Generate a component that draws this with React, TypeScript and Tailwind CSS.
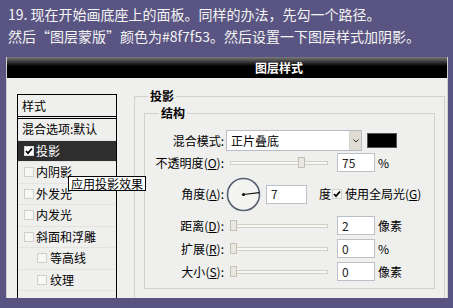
import React from "react"

const layerItems = [
  { label: "混合选项:默认", box: false },
  { label: "投影", box: true, checked: true, active: true },
  { label: "内阴影", box: true },
  { label: "外发光", box: true },
  { label: "内发光", box: true },
  { label: "斜面和浮雕", box: true },
  { label: "等高线", box: true, indent: true },
  { label: "纹理", box: true, indent: true },
]

function Check({ checked, dark }: { checked?: boolean; dark?: boolean }) {
  return (
    <span
      className={`flex h-[10px] w-[10px] shrink-0 items-center justify-center border ${
        dark ? "border-[#d8d8d8] bg-white" : "border-[#cfcfcb] bg-[#f7f7f5]"
      }`}
    >
      {checked && (
        <svg width="8" height="8" viewBox="0 0 8 8">
          <path d="M1 4 L3 6.2 L7 1.5" fill="none" stroke="#000" strokeWidth="1.8" />
        </svg>
      )}
    </span>
  )
}

function Slider({ value }: { value: number }) {
  return (
    <div className="relative ml-[6px] h-[11px] w-[98px]">
      <div className="absolute left-0 right-0 top-[4px] h-[4px] border border-[#d2d0c6] bg-[#f7f7f3]" />
      <div
        className="absolute top-0 h-[11px] w-[7px] border border-[#c3c0b4] bg-[#e9e7df]"
        style={{ left: `${Math.round(value * 91)}px` }}
      />
    </div>
  )
}

function NumBox({ v, w = "w-[38px]" }: { v: string; w?: string }) {
  return (
    <div className={`flex h-[19px] ${w} items-center border border-[#bcc0c8] bg-white pl-[4px] text-[12px] text-[#222]`}>
      {v}
    </div>
  )
}

function Label({ text, k }: { text: string; k?: string }) {
  return (
    <span className="w-[79px] shrink-0 text-right">
      {text}
      {k && (
        <>
          (<span className="underline">{k}</span>)
        </>
      )}
      :
    </span>
  )
}

function SliderRow({ text, k, value, v, unit, mt }: { text: string; k: string; value: number; v: string; unit: string; mt: string }) {
  return (
    <div className={`flex h-[19px] items-center ${mt}`}>
      <Label text={text} k={k} />
      <Slider value={value} />
      <div className="ml-[9px]">
        <NumBox v={v} />
      </div>
      <span className="ml-[3px]">{unit}</span>
    </div>
  )
}

export default function App() {
  return (
    <div className="h-[308px] w-[453px] overflow-hidden bg-[#5a5482] font-['Noto_Sans_CJK_SC',sans-serif]">
      <div className="pl-[8px] pt-[3px] text-[14px] leading-[22px] text-[#f4f4f4]">
        <p>19. 现在开始画底座上的面板。同样的办法，先勾一个路径。</p>
        <p>然后“图层蒙版”颜色为#8f7f53。然后设置一下图层样式加阴影。</p>
      </div>

      <div className="ml-[6px] mt-[10px] w-[442px] border-x border-[#cfcfcf]">
        {/* title bar */}
        <div className="flex h-[21px] items-center bg-[linear-gradient(to_bottom,#7a7a7a_0%,#2a2a2a_28%,#000_45%,#000_100%)] pl-[248px] text-[12px] font-bold text-white">
          图层样式
        </div>

        {/* body */}
        <div className="relative flex h-[220px] bg-[#efefed] pl-[10px] pr-[2px] pt-[10px] text-[12px] leading-[16px] text-black">
          <div className="mt-[6px] w-[100px] shrink-0 border border-b-0 border-black">
            <div className="flex h-[21px] items-center pl-[4px]">样式</div>
            <div className="h-[3px] border-y border-black" />
            {layerItems.map((it) => (
              <div
                key={it.label}
                className={`flex h-[21.5px] items-center gap-[2px] border-b border-[#e3e3e0] ${
                  it.box ? (it.indent ? "pl-[19px]" : "pl-[6px]") : "pl-[4px]"
                } ${it.active ? "bg-[#2e2e2e] text-white" : ""}`}
              >
                {it.box && <Check checked={it.checked} dark={it.active} />}
                <span className={it.indent ? "ml-[1px]" : ""}>{it.label}</span>
              </div>
            ))}
          </div>

          <fieldset className="ml-[17px] flex-1 border border-b-0 border-[#d3d1c9]">
            <legend className="ml-[13px] px-[2px] font-bold leading-[16px]">投影</legend>
            <div className="px-[9px]">
              <fieldset className="mt-[1px] border border-[#d3d1c9]">
                <legend className="ml-[14px] px-[2px] font-bold leading-[16px]">结构</legend>
                <div className="flex flex-col pb-[7px] pt-[9px]">
                  <div className="flex h-[21px] items-center">
                    <Label text="混合模式" />
                    <div className="ml-[2px] flex h-[21px] w-[136px] items-center border border-[#b8bcc6] bg-white">
                      <span className="flex-1 pl-[4px]">正片叠底</span>
                      <span className="flex h-full w-[12px] items-center justify-center border-l border-[#d8d6cc] bg-[#dedcd3]">
                        <svg width="6" height="4" viewBox="0 0 6 4">
                          <path d="M0.5 0.5 L3 3 L5.5 0.5" fill="none" stroke="#333" strokeWidth="1" />
                        </svg>
                      </span>
                    </div>
                    <div className="ml-[5px] h-[15px] w-[30px] border border-[#555] bg-black" />
                  </div>

                  <SliderRow text="不透明度" k="O" value={0.75} v="75" unit="%" mt="mt-[2px]" />

                  <div className="mt-[5px] flex h-[34px] items-center">
                    <Label text="角度" k="A" />
                    <svg className="ml-[2px]" width="35" height="35" viewBox="0 0 35 35">
                      <circle cx="17.5" cy="17.5" r="16" fill="#f4f4f2" stroke="#56606e" strokeWidth="1.6" />
                      <line x1="17.5" y1="17.5" x2="33.4" y2="15.6" stroke="#111" strokeWidth="1.2" />
                      <circle cx="17.5" cy="17.5" r="1.6" fill="#111" />
                    </svg>
                    <div className="ml-[5px]">
                      <NumBox v="7" w="w-[41px]" />
                    </div>
                    <span className="ml-[12px]">度</span>
                    <span className="ml-[1px]">
                      <Check checked />
                    </span>
                    <span className="ml-[3px]">
                      使用全局光(<span className="underline">G</span>)
                    </span>
                  </div>

                  <SliderRow text="距离" k="D" value={0} v="2" unit="像素" mt="mt-[5px]" />
                  <SliderRow text="扩展" k="R" value={0} v="0" unit="%" mt="mt-[4px]" />
                  <SliderRow text="大小" k="S" value={0} v="0" unit="像素" mt="mt-[4px]" />
                </div>
              </fieldset>
            </div>
          </fieldset>

          <div className="absolute left-[61px] top-[98px] border border-black bg-white px-[2px] leading-[13px]">
            应用投影效果
          </div>
        </div>
      </div>
    </div>
  )
}
